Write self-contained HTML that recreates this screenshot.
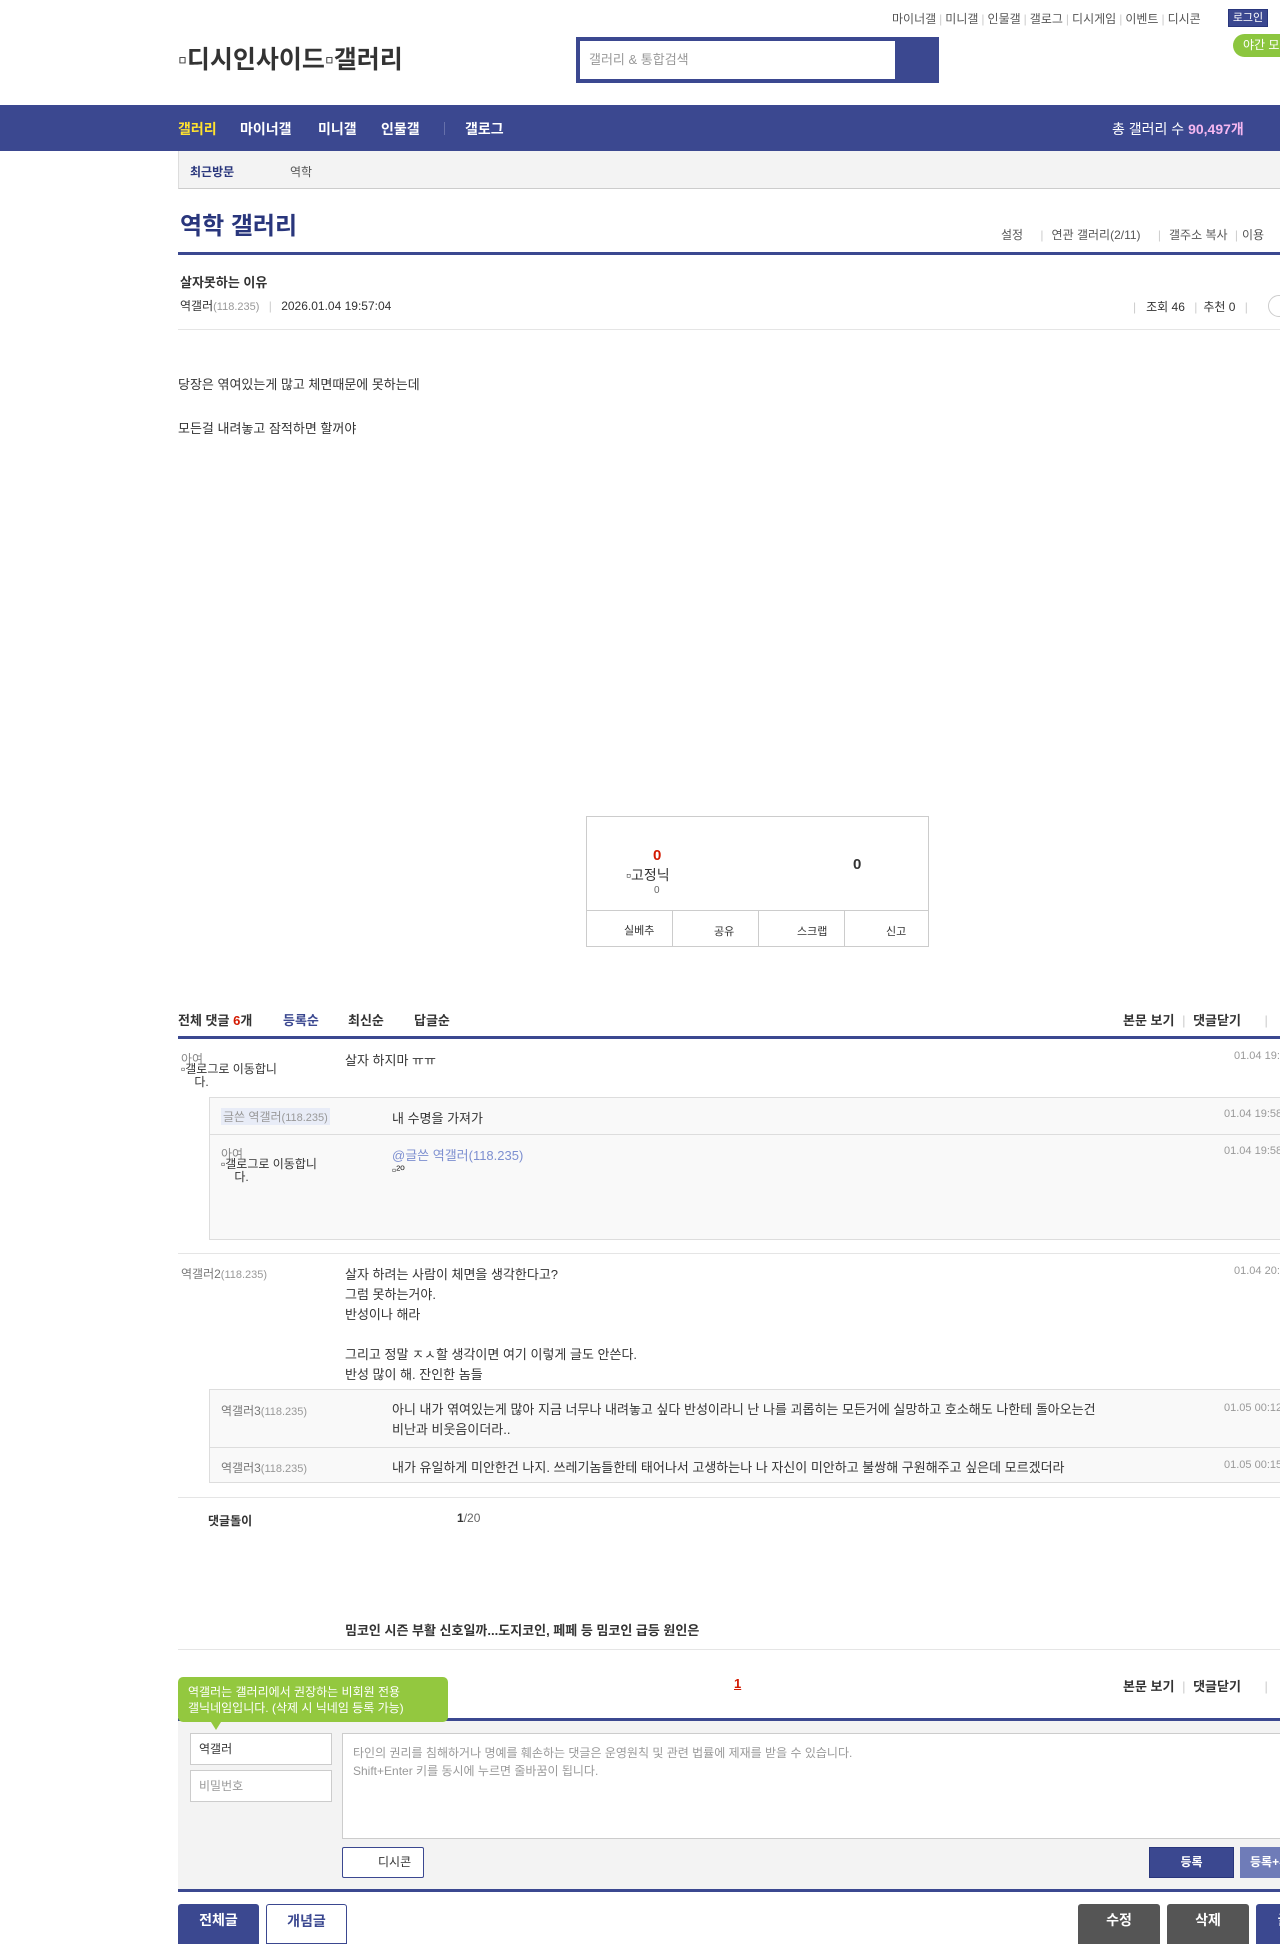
<!DOCTYPE html>
<html><head><meta charset="utf-8"><style>
*{margin:0;padding:0;box-sizing:border-box}
body{width:1280px;height:1923px;overflow:hidden;position:relative;background:#fff;font-family:"Liberation Sans","Noto Sans CJK KR",sans-serif;color:#333;font-size:13px}
.a{position:absolute;white-space:nowrap}
.g{color:#999}
.b{font-weight:bold}
.line{position:absolute;left:178px;right:0}
.btn{position:absolute;text-align:center;font-weight:bold;font-size:14px;line-height:32px;border-radius:3px 3px 0 0}
.sep{color:#ccc;margin:0 3px}
</style></head><body>
<!-- top links -->
<div class="a" style="top:10px;left:892px;font-size:12px;color:#555">마이너갤<span class="sep">|</span>미니갤<span class="sep">|</span>인물갤<span class="sep">|</span>갤로그<span class="sep">|</span>디시게임<span class="sep">|</span>이벤트<span class="sep">|</span>디시콘</div>
<div class="a" style="top:9px;left:1228px;width:40px;height:18px;background:#3b4890;border:1px solid #29367c;color:#fff;font-size:11px;text-align:center;line-height:16px">로그인</div>
<div class="a" style="top:34px;left:1233px;width:60px;height:23px;background:#8cc63f;border-radius:12px;color:#fff;font-size:12px;line-height:23px;padding-left:10px">야간 모드</div>
<div class="a" style="top:40px;left:178px;font-size:25px;font-weight:bold;color:#333">▫디시인사이드▫갤러리</div>
<div class="a" style="top:37px;left:576px;width:363px;height:46px;background:#3b4890"></div>
<div class="a" style="top:41px;left:580px;width:315px;height:38px;background:#fff;color:#999;font-size:13px;line-height:38px;padding-left:9px">갤러리 &amp; 통합검색</div>
<!-- nav -->
<div class="a" style="top:105px;left:0;width:1280px;height:46px;background:#3b4890"></div>
<div class="a b" style="top:119px;left:178px;font-size:14px;color:#ffe22f">갤러리</div>
<div class="a b" style="top:119px;left:240px;font-size:14px;color:#fff">마이너갤</div>
<div class="a b" style="top:119px;left:318px;font-size:14px;color:#fff">미니갤</div>
<div class="a b" style="top:119px;left:381px;font-size:14px;color:#fff">인물갤</div>
<div class="a" style="top:122px;left:444px;width:1px;height:13px;background:#6670aa"></div>
<div class="a b" style="top:119px;left:465px;font-size:14px;color:#fff">갤로그</div>
<div class="a" style="top:119px;left:1112px;font-size:14px;color:#fff">총 갤러리 수 <b style="color:#f5b7f0">90,497</b><b style="color:#f5b7f0">개</b></div>
<!-- subbar -->
<div class="a" style="top:151px;left:178px;width:1102px;height:38px;background:#f3f3f3;border-left:1px solid #ddd;border-bottom:1px solid #ccc"></div>
<div class="a b" style="top:163px;left:190px;font-size:12px;color:#29367c">최근방문</div>
<div class="a" style="top:163px;left:290px;font-size:12px;color:#555">역학</div>
<!-- gallery title -->
<div class="a b" style="top:206px;left:180px;font-size:24px;color:#29367c">역학 갤러리</div>
<div class="a" style="top:226px;left:1001px;font-size:12px;color:#555">설정 <span style="color:#ccc;margin:0 8px 0 14px">|</span>연관 갤러리(2/11) <span style="color:#ccc;margin:0 8px 0 14px">|</span>갤주소 복사 <span style="color:#ccc;margin:0 4px">|</span>이용</div>
<div class="line" style="top:252px;height:3px;background:#3b4890"></div>
<div class="a b" style="top:272px;left:180px;font-size:13px">살자못하는 이유</div>
<div class="a" style="top:297px;left:180px;font-size:12px">역갤러<span class="g" style="font-size:11px">(118.235)</span> <span style="color:#ccc;margin:0 6px">|</span> 2026.01.04 19:57:04</div>
<div class="a" style="top:298px;left:1133px;font-size:12px"><span style="color:#ccc">|</span>&nbsp;&nbsp; 조회 46 <span style="color:#ccc;margin:0 6px">|</span>추천 0 <span style="color:#ccc;margin:0 6px">|</span></div>
<div class="a" style="top:295px;left:1268px;width:22px;height:22px;border:1px solid #ccc;border-radius:50%"></div>
<div class="line" style="top:329px;height:1px;background:#e5e5e5"></div>
<div class="a" style="top:374px;left:178px">당장은 엮여있는게 많고 체면때문에 못하는데</div>
<div class="a" style="top:418px;left:178px">모든걸 내려놓고 잠적하면 할꺼야</div>
<!-- recommend box -->
<div class="a" style="top:816px;left:586px;width:343px;height:131px;border:1px solid #ccc"></div>
<div class="a" style="top:910px;left:586px;width:343px;height:1px;background:#ccc"></div>
<div class="a b" style="top:847px;left:653px;font-size:15px;color:#d31900">0</div>
<div class="a" style="top:865px;left:626px;font-size:14px">▫고정닉</div>
<div class="a g" style="top:885px;left:654px;font-size:10px;color:#666">0</div>
<div class="a b" style="top:856px;left:853px;font-size:15px">0</div>
<div class="a" style="top:910px;left:672px;width:1px;height:36px;background:#ccc"></div>
<div class="a" style="top:910px;left:758px;width:1px;height:36px;background:#ccc"></div>
<div class="a" style="top:910px;left:844px;width:1px;height:36px;background:#ccc"></div>
<div class="a" style="top:922px;left:624px;font-size:11px">실베추</div>
<div class="a" style="top:923px;left:714px;font-size:11px">공유</div>
<div class="a" style="top:923px;left:797px;font-size:11px">스크랩</div>
<div class="a" style="top:923px;left:886px;font-size:11px">신고</div>
<!-- comments -->
<div class="a b" style="top:1010px;left:178px">전체 댓글 <span style="color:#d31900">6</span>개</div>
<div class="a b" style="top:1010px;left:283px;color:#3b4890">등록순</div>
<div class="a b" style="top:1010px;left:348px">최신순</div>
<div class="a b" style="top:1010px;left:414px">답글순</div>
<div class="a b" style="top:1010px;left:1123px">본문 보기 <span style="color:#ccc;font-weight:normal;margin:0 4px">|</span> 댓글닫기 <span style="color:#ccc;font-weight:normal;margin-left:20px">|</span></div>
<div class="line" style="top:1036px;height:3px;background:#3b4890"></div>
<div class="a" style="top:1050px;left:181px;font-size:12px;color:#888">아여</div>
<div class="a" style="top:1063px;left:181px;font-size:12px;line-height:13px;white-space:normal;width:130px">▫갤로그로 이동합니<br>&nbsp;&nbsp;&nbsp;&nbsp;다.</div>
<div class="a" style="top:1050px;left:345px">살자 하지마 ㅠㅠ</div>
<div class="a g" style="top:1050px;left:1234px;font-size:11px">01.04 19:57</div>
<div class="a" style="top:1097px;left:209px;width:1100px;height:143px;background:#f9f9f9;border:1px solid #ddd"></div>
<div class="a" style="top:1134px;left:209px;width:1100px;height:1px;background:#ddd"></div>
<div class="a" style="top:1108px;left:221px;font-size:12px;color:#999;background:#e8ecf7;padding:0 2px">글쓴 역갤러<span style="font-size:11px">(118.235)</span></div>
<div class="a" style="top:1108px;left:392px">내 수명을 가져가</div>
<div class="a g" style="top:1108px;left:1224px;font-size:11px">01.04 19:58</div>
<div class="a" style="top:1145px;left:221px;font-size:12px;color:#888">아여</div>
<div class="a" style="top:1158px;left:221px;font-size:12px;line-height:13px">▫갤로그로 이동합니<br>&nbsp;&nbsp;&nbsp;&nbsp;다.</div>
<div class="a" style="top:1145px;left:392px;color:#7d8fd0">@글쓴 역갤러(118.235)</div>
<div class="a" style="top:1163px;left:392px;font-size:12px">▫²º</div>
<div class="a g" style="top:1145px;left:1224px;font-size:11px">01.04 19:58</div>
<div class="line" style="top:1253px;height:1px;background:#e5e5e5"></div>
<div class="a" style="top:1265px;left:181px;font-size:12px;color:#777">역갤러2<span class="g" style="font-size:11px">(118.235)</span></div>
<div class="a" style="top:1265px;left:345px;line-height:20px">살자 하려는 사람이 체면을 생각한다고?<br>그럼 못하는거야.<br>반성이나 해라<br><br>그리고 정말 ㅈㅅ할 생각이면 여기 이렇게 글도 안쓴다.<br>반성 많이 해. 잔인한 놈들</div>
<div class="a g" style="top:1265px;left:1234px;font-size:11px">01.04 20:12</div>
<div class="a" style="top:1389px;left:209px;width:1100px;height:94px;background:#f9f9f9;border:1px solid #ddd"></div>
<div class="a" style="top:1447px;left:209px;width:1100px;height:1px;background:#ddd"></div>
<div class="a" style="top:1402px;left:221px;font-size:12px;color:#777">역갤러3<span class="g" style="font-size:11px">(118.235)</span></div>
<div class="a" style="top:1400px;left:392px;line-height:20px">아니 내가 엮여있는게 많아 지금 너무나 내려놓고 싶다 반성이라니 난 나를 괴롭히는 모든거에 실망하고 호소해도 나한테 돌아오는건<br>비난과 비웃음이더라..</div>
<div class="a g" style="top:1402px;left:1224px;font-size:11px">01.05 00:12</div>
<div class="a" style="top:1459px;left:221px;font-size:12px;color:#777">역갤러3<span class="g" style="font-size:11px">(118.235)</span></div>
<div class="a" style="top:1457px;left:392px">내가 유일하게 미안한건 나지. 쓰레기놈들한테 태어나서 고생하는나 나 자신이 미안하고 불쌍해 구원해주고 싶은데 모르겠더라</div>
<div class="a g" style="top:1459px;left:1224px;font-size:11px">01.05 00:15</div>
<div class="line" style="top:1497px;height:1px;background:#e5e5e5"></div>
<div class="a b" style="top:1512px;left:208px;font-size:12px">댓글돌이</div>
<div class="a" style="top:1511px;left:457px;font-size:12px;color:#666"><b style="color:#333">1</b>/20</div>
<div class="a b" style="top:1620px;left:345px">밈코인 시즌 부활 신호일까...도지코인, 페페 등 밈코인 급등 원인은</div>
<div class="line" style="top:1649px;height:1px;background:#e5e5e5"></div>
<div class="a b" style="top:1676px;left:734px;color:#d31900;text-decoration:underline">1</div>
<div class="a b" style="top:1676px;left:1123px">본문 보기 <span style="color:#ccc;font-weight:normal;margin:0 4px">|</span> 댓글닫기 <span style="color:#ccc;font-weight:normal;margin-left:20px">|</span></div>
<!-- write -->
<div class="line" style="top:1718px;height:3px;background:#3b4890"></div>
<div class="a" style="top:1721px;left:178px;width:1102px;height:169px;background:#f3f3f3"></div>
<div class="a" style="top:1677px;left:178px;width:270px;height:45px;background:#93c83f;border-radius:5px;color:#fff;font-size:12px;line-height:16px;padding:7px 10px;white-space:normal">역갤러는 갤러리에서 권장하는 비회원 전용<br>갤닉네임입니다. (삭제 시 닉네임 등록 가능)</div>
<div class="a" style="top:1722px;left:211px;width:0;height:0;border-left:5px solid transparent;border-right:5px solid transparent;border-top:8px solid #93c83f"></div>
<div class="a" style="top:1733px;left:190px;width:142px;height:32px;background:#fff;border:1px solid #ccc;font-size:12px;line-height:30px;padding-left:8px">역갤러</div>
<div class="a" style="top:1770px;left:190px;width:142px;height:32px;background:#fff;border:1px solid #ccc;font-size:12px;line-height:30px;padding-left:8px;color:#999">비밀번호</div>
<div class="a" style="top:1733px;left:342px;width:960px;height:106px;background:#fff;border:1px solid #ccc;font-size:12px;line-height:18px;padding:10px;color:#999">타인의 권리를 침해하거나 명예를 훼손하는 댓글은 운영원칙 및 관련 법률에 제재를 받을 수 있습니다.<br>Shift+Enter 키를 동시에 누르면 줄바꿈이 됩니다.</div>
<div class="a" style="top:1847px;left:342px;width:82px;height:31px;background:#fff;border:1px solid #3b4890;border-radius:2px;font-size:12px;line-height:29px;padding-left:35px">디시콘</div>
<div class="a b" style="top:1847px;left:1149px;width:85px;height:31px;background:#3b4890;border:1px solid #29367c;color:#fff;font-size:12px;line-height:29px;text-align:center">등록</div>
<div class="a b" style="top:1847px;left:1240px;width:85px;height:31px;background:#6f7cb8;color:#fff;font-size:12px;line-height:31px;padding-left:10px">등록+추천</div>
<div class="line" style="top:1889px;height:3px;background:#3b4890"></div>
<div class="btn" style="top:1904px;left:178px;width:81px;height:40px;background:#3b4890;color:#fff">전체글</div>
<div class="btn" style="top:1904px;left:266px;width:81px;height:40px;background:#fff;border:1px solid #3b4890;color:#3b4890">개념글</div>
<div class="btn" style="top:1904px;left:1078px;width:82px;height:40px;background:#555;color:#fff">수정</div>
<div class="btn" style="top:1904px;left:1167px;width:82px;height:40px;background:#555;color:#fff">삭제</div>
<div class="btn" style="top:1904px;left:1256px;width:82px;height:40px;background:#3b4890;color:#fff">글쓰기</div>
</body></html>
